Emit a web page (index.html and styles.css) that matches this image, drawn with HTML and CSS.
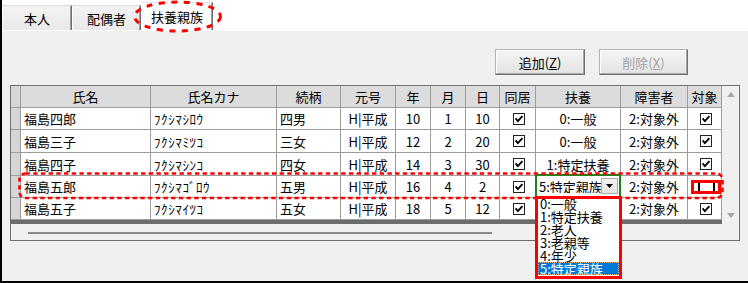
FILE: index.html
```html
<!DOCTYPE html>
<html lang="ja">
<head>
<meta charset="utf-8">
<title>扶養親族</title>
<link rel="stylesheet" href="styles.css">
</head>
<body>
<div class="screen">
  <div class="window">
    <div class="tabs">
      <div class="tab tab1">本人</div>
      <div class="tab tab2">配偶者</div>
      <div class="tab active">扶養親族</div>
    </div>
    <div class="panel">
      <div class="toolbar">
        <button class="btn add" type="button">追加(<u>Z</u>)</button>
        <button class="btn del" type="button" disabled>削除(<u>X</u>)</button>
      </div>
      <div class="grid">
        <div class="table">
          <div class="c h rh"></div>
          <div class="c h">氏名</div>
          <div class="c h">氏名カナ</div>
          <div class="c h">続柄</div>
          <div class="c h">元号</div>
          <div class="c h">年</div>
          <div class="c h">月</div>
          <div class="c h">日</div>
          <div class="c h">同居</div>
          <div class="c h">扶養</div>
          <div class="c h">障害者</div>
          <div class="c h">対象</div>

          <div class="c rh"></div>
          <div class="c l">福島四郎</div>
          <div class="c l kana">ﾌｸｼﾏｼﾛｳ</div>
          <div class="c l">四男</div>
          <div class="c">H|平成</div>
          <div class="c">10</div>
          <div class="c">1</div>
          <div class="c">10</div>
          <div class="c"><svg class="ck" width="12" height="12" viewBox="0 0 12 12"><rect x="0.5" y="0.5" width="11" height="11" fill="#fff" stroke="#222"/><path d="M2.6 5.4 L4.9 8.1 L9.4 3.2" fill="none" stroke="#000" stroke-width="1.9"/></svg></div>
          <div class="c">0:一般</div>
          <div class="c">2:対象外</div>
          <div class="c"><svg class="ck" width="12" height="12" viewBox="0 0 12 12"><rect x="0.5" y="0.5" width="11" height="11" fill="#fff" stroke="#222"/><path d="M2.6 5.4 L4.9 8.1 L9.4 3.2" fill="none" stroke="#000" stroke-width="1.9"/></svg></div>

          <div class="c rh"></div>
          <div class="c l">福島三子</div>
          <div class="c l kana">ﾌｸｼﾏﾐﾂｺ</div>
          <div class="c l">三女</div>
          <div class="c">H|平成</div>
          <div class="c">12</div>
          <div class="c">2</div>
          <div class="c">20</div>
          <div class="c"><svg class="ck" width="12" height="12" viewBox="0 0 12 12"><rect x="0.5" y="0.5" width="11" height="11" fill="#fff" stroke="#222"/><path d="M2.6 5.4 L4.9 8.1 L9.4 3.2" fill="none" stroke="#000" stroke-width="1.9"/></svg></div>
          <div class="c">0:一般</div>
          <div class="c">2:対象外</div>
          <div class="c"><svg class="ck" width="12" height="12" viewBox="0 0 12 12"><rect x="0.5" y="0.5" width="11" height="11" fill="#fff" stroke="#222"/><path d="M2.6 5.4 L4.9 8.1 L9.4 3.2" fill="none" stroke="#000" stroke-width="1.9"/></svg></div>

          <div class="c rh"></div>
          <div class="c l">福島四子</div>
          <div class="c l kana">ﾌｸｼﾏｼﾝｺ</div>
          <div class="c l">四女</div>
          <div class="c">H|平成</div>
          <div class="c">14</div>
          <div class="c">3</div>
          <div class="c">30</div>
          <div class="c"><svg class="ck" width="12" height="12" viewBox="0 0 12 12"><rect x="0.5" y="0.5" width="11" height="11" fill="#fff" stroke="#222"/><path d="M2.6 5.4 L4.9 8.1 L9.4 3.2" fill="none" stroke="#000" stroke-width="1.9"/></svg></div>
          <div class="c">1:特定扶養</div>
          <div class="c">2:対象外</div>
          <div class="c"><svg class="ck" width="12" height="12" viewBox="0 0 12 12"><rect x="0.5" y="0.5" width="11" height="11" fill="#fff" stroke="#222"/><path d="M2.6 5.4 L4.9 8.1 L9.4 3.2" fill="none" stroke="#000" stroke-width="1.9"/></svg></div>

          <div class="c rh"></div>
          <div class="c l">福島五郎</div>
          <div class="c l kana">ﾌｸｼﾏｺﾞﾛｳ</div>
          <div class="c l">五男</div>
          <div class="c">H|平成</div>
          <div class="c">16</div>
          <div class="c">4</div>
          <div class="c">2</div>
          <div class="c"><svg class="ck" width="12" height="12" viewBox="0 0 12 12"><rect x="0.5" y="0.5" width="11" height="11" fill="#fff" stroke="#222"/><path d="M2.6 5.4 L4.9 8.1 L9.4 3.2" fill="none" stroke="#000" stroke-width="1.9"/></svg></div>
          <div class="c editcell">
            <div class="combo">
              <span class="combo-text">5:特定親族</span>
              <span class="ddbtn"><svg width="7" height="4" viewBox="0 0 7 4"><path d="M0 0 H7 L3.5 4 Z" fill="#000"/></svg></span>
            </div>
          </div>
          <div class="c">2:対象外</div>
          <div class="c"><span class="tcb"><i></i></span></div>

          <div class="c rh"></div>
          <div class="c l">福島五子</div>
          <div class="c l kana">ﾌｸｼﾏｲﾂｺ</div>
          <div class="c l">五女</div>
          <div class="c">H|平成</div>
          <div class="c">18</div>
          <div class="c">5</div>
          <div class="c">12</div>
          <div class="c"><svg class="ck" width="12" height="12" viewBox="0 0 12 12"><rect x="0.5" y="0.5" width="11" height="11" fill="#fff" stroke="#222"/><path d="M2.6 5.4 L4.9 8.1 L9.4 3.2" fill="none" stroke="#000" stroke-width="1.9"/></svg></div>
          <div class="c">0:一般</div>
          <div class="c">2:対象外</div>
          <div class="c"><svg class="ck" width="12" height="12" viewBox="0 0 12 12"><rect x="0.5" y="0.5" width="11" height="11" fill="#fff" stroke="#222"/><path d="M2.6 5.4 L4.9 8.1 L9.4 3.2" fill="none" stroke="#000" stroke-width="1.9"/></svg></div>
        </div>
        <div class="vscroll">
          <span class="arrow"><svg width="8" height="5" viewBox="0 0 8 5"><path d="M0 5 H8 L4 0 Z" fill="#a6a6a6"/></svg></span>
          <span class="arrow"><svg width="8" height="5" viewBox="0 0 8 5"><path d="M0 0 H8 L4 5 Z" fill="#a6a6a6"/></svg></span>
        </div>
        <div class="bar"></div>
        <div class="hscroll"><div class="thumb"></div></div>
        <div class="corner"></div>
      </div>
    </div>
  </div>

  <svg class="annot" width="748" height="283" viewBox="0 0 748 283">
    <ellipse cx="177.5" cy="16.5" rx="43" ry="14.5" fill="none" stroke="#f00" stroke-width="3" stroke-dasharray="6 6.5"/>
    <rect x="19.5" y="173.5" width="703" height="24.5" rx="6" fill="none" stroke="#f00" stroke-width="2.6" stroke-dasharray="4.4 3.3"/>
  </svg>

  <div class="droplist">
    <div class="opt first">0:一般</div>
    <div class="opt">1:特定扶養</div>
    <div class="opt">2:老人</div>
    <div class="opt">3:老親等</div>
    <div class="opt">4:年少</div>
    <div class="opt sel">5:特定親族</div>
  </div>
</div>
</body>
</html>
```

FILE: styles.css
```css
* { box-sizing: border-box; }
html, body { margin: 0; padding: 0; }
body {
  background: #fff;
  font-family: "Noto Sans CJK JP", "Noto Sans", sans-serif;
  font-size: 13px;
  color: #000;
  width: 748px;
  height: 283px;
  overflow: hidden;
}
.screen { position: relative; width: 748px; height: 283px; }
.window {
  width: 748px;
  height: 283px;
  border-left: 2px solid #000;
  border-bottom: 2px solid #000;
  display: flex;
  flex-direction: column;
}

/* tabs */
.tabs {
  flex: none;
  height: 30px;
  display: flex;
  align-items: flex-end;
  background: #fff;
}
.tab {
  height: 25px;
  display: flex;
  align-items: center;
  justify-content: center;
  line-height: 1;
  background: linear-gradient(#f3f3f3, #e9e9e9);
  border-top: 1px solid #dcdcdc;
  border-left: 1px solid #fdfdfd;
  border-right: 1px solid #6d6d6d;
  box-shadow: inset -1px 0 #a0a0a0;
}
.tab1 { width: 70px; }
.tab2 { width: 69px; }
.tab.active {
  width: 72px;
  height: 28px;
  background: #fff;
  border-top: 1px solid #e6e6e6;
}

/* panel */
.panel {
  flex: 1;
  background: #f0f0f0;
  border-top: 1px solid #fff;
  padding: 18px 8px 0 8px;
  display: flex;
  flex-direction: column;
}
.toolbar {
  display: flex;
  justify-content: flex-end;
  gap: 14px;
  padding-right: 52px;
}
.btn {
  height: 26px;
  width: 90px;
  padding: 0;
  font-family: inherit;
  font-size: 13px;
  line-height: 1;
  color: #000;
  background: linear-gradient(#f5f5f5, #e3e3e3);
  border: 1px solid #b4b4b4;
  border-right-color: #6f6f6f;
  border-bottom-color: #6f6f6f;
  box-shadow: inset -1px -1px #a8a8a8, inset 1px 1px #fff;
}
.btn.del { width: 89px; color: #a3a3a3; }
.btn u { text-decoration: underline; text-underline-offset: 1px; }

/* grid */
.grid {
  margin-top: 10px;
  width: 730px;
  display: grid;
  grid-template-columns: 711px 17px;
  grid-template-rows: 134px 4px 16px;
  border: 1px solid #6f6f6f;
  background: #f0f0f0;
}
.table {
  grid-column: 1;
  grid-row: 1;
  display: grid;
  grid-template-columns: 10px 130px 126px 64px 55px 35px 35px 34px 36px 85px 67px 34px;
  grid-template-rows: 22px 22px 23px 23px 22px 22px;
  background: #fff;
}
.c {
  border-right: 1px solid #9c9c9c;
  border-bottom: 1px solid #9c9c9c;
  display: flex;
  align-items: center;
  justify-content: center;
  white-space: nowrap;
  overflow: hidden;
  line-height: 1;
}
.c.h { background: #dcdcdc; }
.c.rh { background: #d5d5d5; }
.c.l { justify-content: flex-start; padding-left: 3px; }
.c.kana { letter-spacing: 0.6px; }
.ck { display: block; margin-left: 3px; }

.c.editcell {
  overflow: visible;
  align-items: flex-start;
  justify-content: flex-start;
}
.combo {
  width: 86px;
  height: 24px;
  margin: -2px 0 0 -1px;
  border: 2px solid #1b841b;
  background: #fff;
  display: flex;
  align-items: center;
  padding-left: 2px;
}
.combo-text { flex: 1; min-width: 0; overflow: hidden; white-space: nowrap; }
.ddbtn {
  flex: none;
  width: 17px;
  height: 16px;
  margin-right: 1px;
  background: linear-gradient(#f2f2f2, #e2e2e2);
  border: 1px solid #acacac;
  display: flex;
  align-items: center;
  justify-content: center;
}
.ddbtn svg { display: block; }

.tcb {
  width: 30px;
  height: 14px;
  margin-left: 3px;
  border: 3px solid #f00;
  background: #fff;
  display: flex;
  justify-content: center;
}
.tcb i {
  width: 17px;
  border-left: 2px solid #000;
  border-right: 2px solid #000;
}

.vscroll {
  grid-column: 2;
  grid-row: 1 / 3;
  display: flex;
  flex-direction: column;
  justify-content: space-between;
  background: #f0f0f0;
}
.arrow {
  width: 17px;
  height: 17px;
  display: flex;
  align-items: center;
  justify-content: center;
}
.arrow svg { display: block; }
.bar { grid-column: 1; grid-row: 2; background: #6b6b6b; }
.hscroll { grid-column: 1; grid-row: 3; padding: 8px 0 0 17px; background: #f0f0f0; }
.thumb { width: 464px; height: 2px; background: #8a8a8a; }
.corner { grid-column: 2; grid-row: 3; background: #f0f0f0; }

/* annotations / overlays */
.annot { position: absolute; left: 0; top: 0; pointer-events: none; }
.droplist {
  position: absolute;
  left: 538px;
  top: 199px;
  width: 81px;
  height: 77px;
  background: #fff;
  outline: 3px solid #f00;
  overflow: hidden;
}
.opt {
  height: 13px;
  line-height: 13px;
  padding-left: 2px;
  white-space: nowrap;
}
.opt.first { margin-top: -2px; }
.opt.sel {
  background: #0078d7;
  color: #fff;
  outline: 1px dotted #f2b36d;
  outline-offset: -1px;
}
```
